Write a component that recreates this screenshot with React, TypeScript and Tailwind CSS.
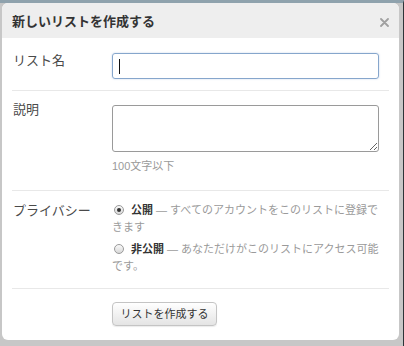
import type { ReactNode } from 'react';

const FONT = '"Liberation Sans", "Noto Sans CJK JP", sans-serif';

function Row({ label, labelClass, className, children }: { label: string; labelClass?: string; className?: string; children: ReactNode }) {
  return (
    <div className={`flex border-b border-[#e8e8e8] ${className ?? ''}`}>
      <div className={`w-[100px] shrink-0 pl-[1px] text-[13px] text-[#4a4a4a] ${labelClass ?? ''}`}>{label}</div>
      <div className="w-[267px]">{children}</div>
    </div>
  );
}

function Radio({ checked }: { checked?: boolean }) {
  return (
    <span className="relative ml-[2px] mr-[7px] inline-block h-[10px] w-[10px] rounded-full border border-[#9a9a9a] bg-gradient-to-b from-[#fafafa] to-[#d8d8d8] align-[-1px]">
      {checked && <span className="absolute left-[2px] top-[2px] h-[4px] w-[4px] rounded-full bg-[#333]" />}
    </span>
  );
}

export default function App() {
  return (
    <div
      className="h-[346px] w-[404px] overflow-hidden border-t-[3px] border-r border-t-[#8fa2ad] border-r-[#2d3438] bg-[#c7c7c7] pl-[2px]"
      style={{ fontFamily: FONT }}
    >
      <div className="h-[337px] w-[397px] overflow-hidden rounded-[6px] bg-white">
        {/* header */}
        <div className="flex h-[35px] items-center justify-between bg-[#eeeeee] pl-[10px] pr-[10px] pt-[2px]">
          <span className="text-[13px] font-bold leading-[16px] text-[#333]">新しいリストを作成する</span>
          <svg width="9" height="9" viewBox="0 0 9 9" className="mt-[1px]">
            <path d="M1 1L8 8M8 1L1 8" stroke="#a0a0a0" strokeWidth="1.8" strokeLinecap="round" />
          </svg>
        </div>

        <div className="px-[10px]">
          <Row label="リスト名" labelClass="leading-[16px]" className="pb-[11px] pt-[15px]">
            <div className="flex h-[26px] items-center rounded-[3px] border border-[#86a6cc] pl-[6px] shadow-[0_0_2px_rgba(82,130,190,0.35)]">
              <span className="h-[15px] w-[1px] bg-[#111]" />
            </div>
          </Row>

          <Row label="説明" labelClass="leading-[16px] -mt-[3px]" className="pb-[16px] pt-[14px]">
            <textarea className="block h-[47px] w-[267px] rounded-[3px] border border-[#9a9a9a] outline-none" />
            <div className="mt-[6px] text-[11px] leading-[16px] text-[#9a9a9a]">100文字以下</div>
          </Row>

          <Row label="プライバシー" labelClass="leading-[17px]" className="pb-[13px] pt-[11px]">
            <div className="text-[11px] leading-[17px] text-[#9a9a9a]">
              <div>
                <Radio checked />
                <b className="text-[#333]">公開</b> — すべてのアカウントをこのリストに登録できます
              </div>
              <div className="mt-[5px]">
                <Radio />
                <b className="text-[#333]">非公開</b> — あなただけがこのリストにアクセス可能です。
              </div>
            </div>
          </Row>

          <div className="flex pt-[13px]">
            <div className="w-[100px] shrink-0" />
            <button
              type="button"
              className="h-[24px] w-[105px] rounded-[4px] border border-[#c4c4c4] bg-gradient-to-b from-white to-[#e4e4e4] text-[11px] leading-[16px] text-[#333] shadow-[0_1px_1px_rgba(0,0,0,0.08)]"
            >
              リストを作成する
            </button>
          </div>
        </div>
      </div>
    </div>
  );
}
